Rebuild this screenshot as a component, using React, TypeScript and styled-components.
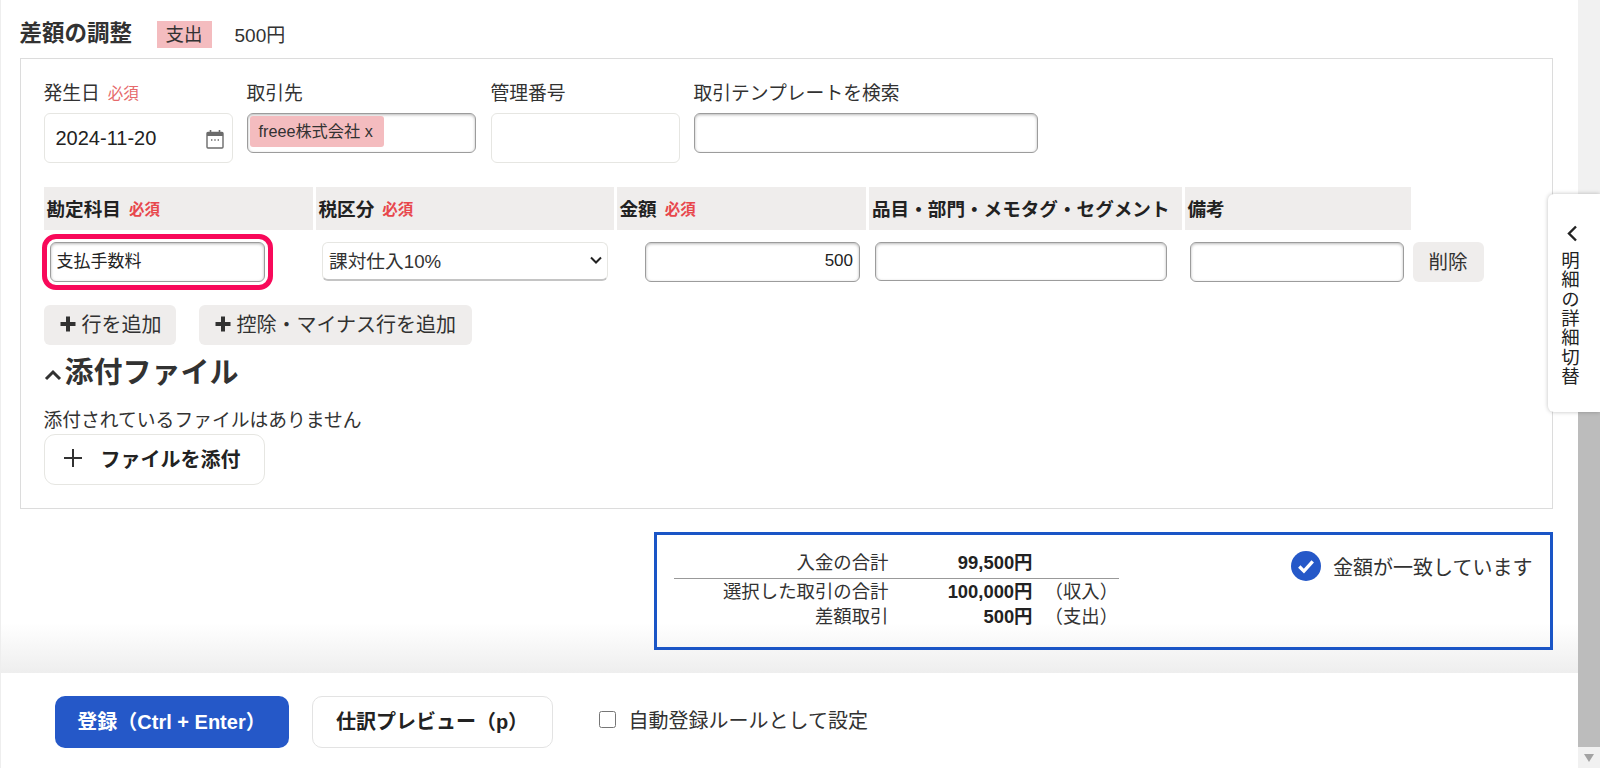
import React from "react";
import styled, { createGlobalStyle } from "styled-components";

const Global = createGlobalStyle`
  html, body { margin: 0; padding: 0; height: 768px; overflow: hidden; background: #fff; }
  body { font-family: "Liberation Sans", "Noto Sans CJK JP", sans-serif; color: #323232; }
  * { box-sizing: border-box; }
`;

const Page = styled.div`
  position: relative;
  display: flex;
  width: 1600px;
  height: 768px;
  overflow: hidden;
`;
const Main = styled.div`
  flex: 1;
  display: flex;
  flex-direction: column;
  min-width: 0;
  border-left: 1px solid #eeeeee;
`;
const Content = styled.div`
  flex: 1;
  display: flex;
  flex-direction: column;
  padding: 21px 25px 0 18.5px;
  background: linear-gradient(to bottom, #fff calc(100% - 50px), #eeeeee 100%);
`;
const TitleRow = styled.div`
  display: flex;
  align-items: center;
  height: 27px;
  margin-bottom: 10px;
`;
const Title = styled.h2`
  margin: 0 24px 2px 0;
  font-size: 22.5px;
  line-height: 27px;
  font-weight: 700;
  width: 113px;
  white-space: nowrap;
`;
const Badge = styled.span`
  display: inline-flex;
  align-items: center;
  justify-content: center;
  width: 55px;
  height: 27px;
  padding-bottom: 3px;
  background: #f4bcbf;
  font-size: 18.5px;
  margin-right: 23px;
`;
const Amount = styled.span`
  padding-bottom: 3px;
  font-size: 19px;
`;
const Panel = styled.section`
  border: 1px solid #dcdcdc;
  padding: 19px 0 23px 23px;
  background: #fff;
`;
const TopFields = styled.div`
  display: flex;
  align-items: flex-start;
  margin-bottom: 24px;
`;
const Field = styled.div<{ $w: number; $mr: number }>`
  width: ${(p) => p.$w}px;
  margin-right: ${(p) => p.$mr}px;
`;
const FieldLabel = styled.div`
  display: flex;
  align-items: center;
  height: 27px;
  margin-bottom: 8px;
  font-size: 18.8px;
  white-space: nowrap;
`;
const Required = styled.span<{ $bold?: boolean }>`
  margin-left: 8px;
  font-size: 15.5px;
  color: ${(p) => (p.$bold ? "#e8474c" : "#e66a6c")};
  font-weight: ${(p) => (p.$bold ? 700 : 400)};
`;
const SoftBox = styled.div`
  position: relative;
  display: flex;
  align-items: center;
  height: 50px;
  border: 1px solid #e6e6e2;
  border-radius: 6px;
  padding-left: 11px;
  font-size: 20px;
  color: #222;
`;
const CalendarIcon = styled.svg`
  position: absolute;
  right: 8px;
  top: 15px;
`;
const inset = `
  border: 1px solid #9c9c9c;
  border-radius: 6px;
  box-shadow: inset 0 1px 3px rgba(0, 0, 0, 0.28);
  background: #fff;
`;
const TokenBox = styled.div`
  ${inset}
  height: 40px;
  padding: 2px;
  display: flex;
  align-items: flex-start;
`;
const Chip = styled.span`
  display: inline-flex;
  align-items: center;
  height: 31px;
  width: 134px;
  padding: 0 0 3px 9px;
  border-radius: 3px;
  background: #f4bcbf;
  font-size: 16.2px;
  white-space: nowrap;
`;
const TextBox = styled.input<{ $right?: boolean; $w?: number; $ml?: number; $h?: number }>`
  ${inset}
  display: block;
  width: ${(p) => (p.$w ? `${p.$w}px` : "100%")};
  height: ${(p) => p.$h ?? 40}px;
  margin-left: ${(p) => p.$ml ?? 0}px;
  padding: 0 ${(p) => (p.$right ? 6 : 6)}px ${(p) => (p.$right ? 3 : 6)}px 6px;
  font: 17px "Liberation Sans", "Noto Sans CJK JP", sans-serif;
  color: #222;
  text-align: ${(p) => (p.$right ? "right" : "left")};
  outline: none;
`;
const AccentBox = styled(TextBox)`
  outline: 5px solid #f8095a;
  outline-offset: 3px;
`;
const Table = styled.div`
  display: grid;
  grid-template-columns: 269px 298px 249.5px 312.5px 226px 1fr;
  column-gap: 3px;
`;
const HeadCell = styled.div`
  display: flex;
  align-items: center;
  height: 43px;
  padding: 0 0 2px 3px;
  background: #efedec;
  font-size: 18.6px;
  font-weight: 700;
  color: #222;
  white-space: nowrap;
`;
const BodyCell = styled.div`
  padding-top: 12px;
  display: flex;
  align-items: flex-start;
`;
const SelectWrap = styled.div`
  position: relative;
  width: 286px;
  height: 39px;
  margin-left: 6.5px;
`;
const TaxSelect = styled.select`
  appearance: none;
  width: 100%;
  height: 100%;
  padding-left: 6px;
  border: 1px solid #e6e6e2;
  border-bottom: 2px solid #c4c4c4;
  border-radius: 6px;
  background: #fff;
  font: 18.7px "Liberation Sans", "Noto Sans CJK JP", sans-serif;
  color: #323232;
  outline: none;
`;
const SelectChevron = styled.svg`
  position: absolute;
  right: 5px;
  top: 14px;
  pointer-events: none;
`;
const DeleteButton = styled.button`
  width: 71px;
  height: 40px;
  margin-left: -1px;
  padding: 0 0 3px;
  border: 0;
  border-radius: 6px;
  background: #efedec;
  font: 19.5px "Liberation Sans", "Noto Sans CJK JP", sans-serif;
  color: #323232;
`;
const AddRow = styled.div`
  display: flex;
  gap: 23px;
  margin-top: 23px;
`;
const AddButton = styled.button<{ $w: number }>`
  display: flex;
  align-items: center;
  width: ${(p) => p.$w}px;
  height: 40px;
  padding: 0 0 3px 15px;
  gap: 5px;
  border: 0;
  border-radius: 6px;
  background: #efedec;
  font: 20px "Liberation Sans", "Noto Sans CJK JP", sans-serif;
  color: #323232;
  white-space: nowrap;
`;
const AttachHeading = styled.h3`
  display: flex;
  align-items: center;
  height: 40px;
  margin: 5px 0 18px;
  font-size: 29px;
  font-weight: 700;
  white-space: nowrap;
`;
const ChevronUp = styled.svg`
  margin: 9px 3px 0 0;
`;
const EmptyText = styled.div`
  height: 26px;
  font-size: 18.8px;
  line-height: 26px;
  white-space: nowrap;
`;
const FileButton = styled.button`
  display: flex;
  align-items: center;
  width: 221px;
  height: 51px;
  padding: 0 0 3px 18px;
  gap: 18px;
  border: 1px solid #e6e6e2;
  border-radius: 11px;
  background: #fff;
  font: 700 20px "Liberation Sans", "Noto Sans CJK JP", sans-serif;
  color: #222;
  white-space: nowrap;
`;
const Summary = styled.section`
  display: flex;
  justify-content: space-between;
  align-self: flex-end;
  width: 899px;
  height: 118px;
  margin-top: 23px;
  padding: 13px 17px 0 17px;
  border: 3px solid #1a55c6;
`;
const Totals = styled.div`
  width: 445px;
`;
const TotalRow = styled.div<{ $h: number; $line?: boolean }>`
  display: grid;
  grid-template-columns: 215px 144px 1fr;
  align-items: center;
  height: ${(p) => p.$h}px;
  font-size: 18.4px;
  line-height: 22px;
  border-bottom: ${(p) => (p.$line ? "1px solid #999" : "0")};
  white-space: nowrap;
`;
const TotalLabel = styled.span`
  text-align: right;
`;
const TotalValue = styled.span`
  text-align: right;
  font-weight: 700;
  color: #222;
`;
const TotalNote = styled.span`
  padding-left: 12px;
`;
const Matched = styled.div`
  display: flex;
  align-items: center;
  gap: 12px;
  height: 30px;
  margin-top: 3px;
  font-size: 20px;
  white-space: nowrap;
`;
const Footer = styled.footer`
  display: flex;
  align-items: flex-start;
  height: 95px;
  padding: 23px 0 0 53.5px;
  background: #fff;
`;
const Primary = styled.button`
  width: 234px;
  height: 52px;
  margin-right: 23px;
  padding: 0 0 3px;
  border: 0;
  border-radius: 10px;
  background: #2558c8;
  color: #fff;
  font: 700 20px "Liberation Sans", "Noto Sans CJK JP", sans-serif;
  white-space: nowrap;
`;
const Secondary = styled.button`
  width: 241px;
  height: 52px;
  margin-right: 46px;
  padding: 0 0 3px;
  border: 1px solid #e3e3e3;
  border-radius: 10px;
  background: #fff;
  color: #222;
  font: 700 20px "Liberation Sans", "Noto Sans CJK JP", sans-serif;
  white-space: nowrap;
`;
const CheckLabel = styled.label`
  display: flex;
  align-items: center;
  height: 46px;
  gap: 13px;
  font-size: 20px;
  white-space: nowrap;
`;
const CheckBox = styled.input`
  width: 17px;
  height: 17px;
  margin: 0;
`;
const ScrollBar = styled.div`
  display: flex;
  flex-direction: column;
  flex: 0 0 22.5px;
  background: #f1f1f1;
`;
const ScrollTrack = styled.div`
  flex: 1;
  padding-top: 300px;
  display: flex;
`;
const ScrollThumb = styled.div`
  flex: 1;
  background: #bcbcbc;
`;
const ScrollArrow = styled.div`
  display: flex;
  align-items: center;
  justify-content: center;
  height: 21px;
`;
const SideTab = styled.div`
  position: absolute;
  top: 194px;
  right: 0;
  display: flex;
  flex-direction: column;
  align-items: center;
  width: 52px;
  height: 218px;
  padding-top: 31px;
  background: #fff;
  border-radius: 6px 0 0 6px;
  box-shadow: 0 0 4px rgba(0, 0, 0, 0.25);
`;
const TabChevron = styled.svg`
  margin-right: 4px;
`;
const TabText = styled.div`
  margin: 9px 11px 0 0;
  writing-mode: vertical-rl;
  font-size: 18.4px;
  letter-spacing: 0.9px;
  color: #222;
  white-space: nowrap;
`;

const PlusBold = () => (
  <svg width="18" height="18" viewBox="0 0 18 18">
    <path d="M9 1.500v15M1.500 9h15" stroke="#323232" strokeWidth="4" />
  </svg>
);

const totals = [
  { label: "入金の合計", value: "99,500円", note: "", h: 31, line: true },
  { label: "選択した取引の合計", value: "100,000円", note: "（収入）", h: 25, line: false },
  { label: "差額取引", value: "500円", note: "（支出）", h: 25, line: false },
];

export default function App() {
  return (
    <Page>
      <Global />
      <Main>
        <Content>
          <TitleRow>
            <Title>差額の調整</Title>
            <Badge>支出</Badge>
            <Amount>500円</Amount>
          </TitleRow>
          <Panel>
            <TopFields>
              <Field $w={189} $mr={14}>
                <FieldLabel>
                  発生日<Required>必須</Required>
                </FieldLabel>
                <SoftBox>
                  2024-11-20
                  <CalendarIcon width="18" height="20" viewBox="0 0 18 20">
                    <path d="M2 3.500h14a1 1 0 0 1 1 1V18a1 1 0 0 1-1 1H2a1 1 0 0 1-1-1V4.500a1 1 0 0 1 1-1z" fill="#fff" stroke="#6b6b6b" strokeWidth="1.400" />
                    <path d="M1 3.500h16V7H1z" fill="#6b6b6b" />
                    <path d="M4.500 1v3M13.500 1v3" stroke="#6b6b6b" strokeWidth="1.600" />
                    <path d="M5 11h1.400M8.300 11h1.400M11.600 11h1.400" stroke="#6b6b6b" strokeWidth="1.400" />
                  </CalendarIcon>
                </SoftBox>
              </Field>
              <Field $w={229} $mr={15}>
                <FieldLabel>取引先</FieldLabel>
                <TokenBox>
                  <Chip>freee株式会社 x</Chip>
                </TokenBox>
              </Field>
              <Field $w={189} $mr={14}>
                <FieldLabel>管理番号</FieldLabel>
                <SoftBox />
              </Field>
              <Field $w={344} $mr={0}>
                <FieldLabel>取引テンプレートを検索</FieldLabel>
                <TextBox readOnly value="" />
              </Field>
            </TopFields>
            <Table>
              <HeadCell>
                勘定科目<Required $bold>必須</Required>
              </HeadCell>
              <HeadCell>
                税区分<Required $bold>必須</Required>
              </HeadCell>
              <HeadCell>
                金額<Required $bold>必須</Required>
              </HeadCell>
              <HeadCell>品目・部門・メモタグ・セグメント</HeadCell>
              <HeadCell>備考</HeadCell>
              <div />
              <BodyCell>
                <AccentBox readOnly value="支払手数料" $w={215} $ml={6} />
              </BodyCell>
              <BodyCell>
                <SelectWrap>
                  <TaxSelect defaultValue="課対仕入10%">
                    <option>課対仕入10%</option>
                  </TaxSelect>
                  <SelectChevron width="14" height="9" viewBox="0 0 14 9">
                    <path d="M2 1.500l5 5 5-5" fill="none" stroke="#222" strokeWidth="2" />
                  </SelectChevron>
                </SelectWrap>
              </BodyCell>
              <BodyCell>
                <TextBox readOnly value="500" $right $w={215} $ml={28.5} />
              </BodyCell>
              <BodyCell>
                <TextBox readOnly value="" $w={292} $ml={5.5} $h={39} />
              </BodyCell>
              <BodyCell>
                <TextBox readOnly value="" $w={214} $ml={5} />
              </BodyCell>
              <BodyCell>
                <DeleteButton>削除</DeleteButton>
              </BodyCell>
            </Table>
            <AddRow>
              <AddButton $w={132}>
                <PlusBold />
                行を追加
              </AddButton>
              <AddButton $w={273}>
                <PlusBold />
                控除・マイナス行を追加
              </AddButton>
            </AddRow>
            <AttachHeading>
              <ChevronUp width="18" height="12" viewBox="0 0 18 12">
                <path d="M2 10l7-7 7 7" fill="none" stroke="#323232" strokeWidth="3" />
              </ChevronUp>
              添付ファイル
            </AttachHeading>
            <EmptyText>添付されているファイルはありません</EmptyText>
            <FileButton>
              <svg width="20" height="20" viewBox="0 0 20 20">
                <path d="M10 1v18M1 10h18" stroke="#323232" strokeWidth="2" />
              </svg>
              ファイルを添付
            </FileButton>
          </Panel>
          <Summary>
            <Totals>
              {totals.map((t) => (
                <TotalRow key={t.label} $h={t.h} $line={t.line}>
                  <TotalLabel>{t.label}</TotalLabel>
                  <TotalValue>{t.value}</TotalValue>
                  <TotalNote>{t.note}</TotalNote>
                </TotalRow>
              ))}
            </Totals>
            <Matched>
              <svg width="30" height="30" viewBox="0 0 29 29">
                <circle cx="14.500" cy="14.500" r="14.500" fill="#2558c8" />
                <path d="M8 15l4.500 4.500L21 10" fill="none" stroke="#fff" strokeWidth="3.200" />
              </svg>
              金額が一致しています
            </Matched>
          </Summary>
        </Content>
        <Footer>
          <Primary>登録（Ctrl + Enter）</Primary>
          <Secondary>仕訳プレビュー（p）</Secondary>
          <CheckLabel>
            <CheckBox type="checkbox" readOnly />
            自動登録ルールとして設定
          </CheckLabel>
        </Footer>
      </Main>
      <ScrollBar>
        <ScrollTrack>
          <ScrollThumb />
        </ScrollTrack>
        <ScrollArrow>
          <svg width="10" height="8" viewBox="0 0 10 8">
            <path d="M0 0h10L5 8z" fill="#a3a3a3" />
          </svg>
        </ScrollArrow>
      </ScrollBar>
      <SideTab>
        <TabChevron width="12" height="17" viewBox="0 0 12 17">
          <path d="M10 1.500L3 8.500l7 7" fill="none" stroke="#222" strokeWidth="2.400" />
        </TabChevron>
        <TabText>明細の詳細切替</TabText>
      </SideTab>
    </Page>
  );
}
